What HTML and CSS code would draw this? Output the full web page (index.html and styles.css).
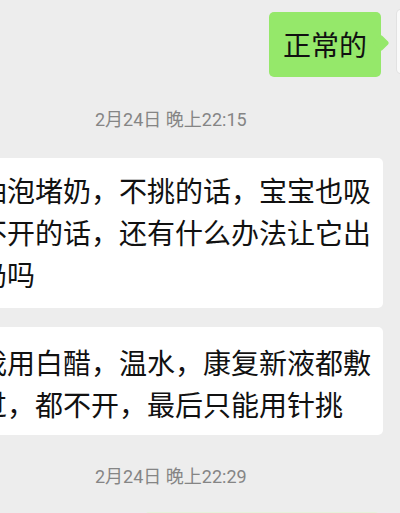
FILE: index.html
```html
<!DOCTYPE html>
<html lang="zh-CN">
<head>
<meta charset="utf-8">
<link rel="stylesheet" href="styles.css">
</head>
<body>
<div class="chat">
  <div class="row me">
    <div class="bubble green">正常的<span class="tail"></span></div>
    <div class="avatar"></div>
  </div>
  <div class="time">2月24日 晚上22:15</div>
  <div class="row other">
    <div class="bubble white b1">油泡堵奶，不挑的话，宝宝也吸<br>不开的话，还有什么办法让它出<br>奶吗</div>
  </div>
  <div class="row other">
    <div class="bubble white b2">我用白醋，温水，康复新液都敷<br>过，都不开，最后只能用针挑</div>
  </div>
  <div class="time t2">2月24日 晚上22:29</div>
  <div class="row me next">
    <div class="bubble green pale"></div>
  </div>
</div>
</body>
</html>
```
FILE: styles.css
```css
html, body {
  margin: 0;
  padding: 0;
  background: #ededed;
  width: 400px;
  height: 513px;
  overflow: hidden;
}
.chat {
  display: flex;
  flex-direction: column;
  font-family: "Noto Sans CJK SC", "Noto Sans", sans-serif;
  color: #111;
}
.row {
  display: flex;
}
.row.me {
  justify-content: flex-end;
  align-items: flex-start;
  margin-top: 10px;
  margin-right: -61px;
}
.bubble {
  position: relative;
  font-size: 28px;
  line-height: 42px;
  white-space: nowrap;
  border-radius: 5px;
}
.green {
  background: #95e86a;
  padding: 11px 14px 12px 14px;
  margin-top: 2px;
  margin-right: 16px;
}
.tail {
  position: absolute;
  right: -6px;
  top: 25px;
  width: 12px;
  height: 12px;
  background: #95e86a;
  transform: rotate(45deg);
  border-radius: 2px;
}
.avatar {
  width: 64px;
  height: 63px;
  background: #fafafa;
  border-radius: 4px;
  box-shadow: 0 0 0 1px #e2e2e2;
}
.time {
  font-family: "Roboto", "Noto Sans CJK SC", sans-serif;
  font-size: 18px;
  line-height: 24px;
  color: #858585;
  padding-left: 95px;
  margin-top: 31px;
}
.row.other {
  justify-content: flex-start;
}
.white {
  background: #ffffff;
  margin-left: -35px;
  padding: 11px 12px 13px 14px;
  width: 392px;
}
.b1 {
  margin-top: 26px;
}
.b2 {
  margin-top: 19px;
  padding-top: 14px;
  padding-bottom: 10px;
}
.t2 {
  margin-top: 30px;
}
.row.next {
  margin-top: 23px;
  margin-right: 0;
}
.pale {
  background: #e6f2dc;
  width: 236px;
  height: 40px;
  padding: 0;
  margin-right: 20px;
  margin-top: 0;
}
```
